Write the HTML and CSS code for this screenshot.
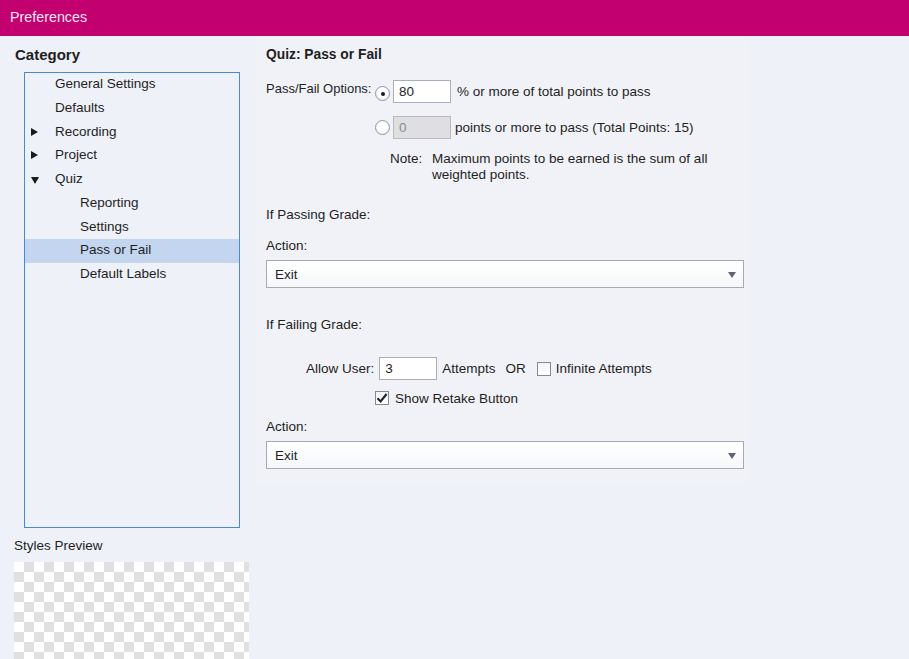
FILE: index.html
```html
<!DOCTYPE html>
<html>
<head>
  <title>Preferences</title>
  <meta charset="UTF-8">
  <link rel="stylesheet" href="styles.css">
</head>
<body>
  <div class="titlebar">Preferences</div>
  <div class="main">
    <div class="sidebar">
      <div class="heading">Category</div>
      <ul class="tree">
        <li class="node">General Settings</li>
        <li class="node">Defaults</li>
        <li class="node"><span class="twisty closed"></span>Recording</li>
        <li class="node"><span class="twisty closed"></span>Project</li>
        <li class="node"><span class="twisty open"></span>Quiz</li>
        <li class="node child">Reporting</li>
        <li class="node child">Settings</li>
        <li class="node child selected">Pass or Fail</li>
        <li class="node child">Default Labels</li>
      </ul>
      <div class="preview-label">Styles Preview</div>
      <div class="preview"></div>
    </div>

    <div class="panel">
      <div class="heading">Quiz: Pass or Fail</div>

      <div class="row opt-row">
        <span class="opt-label">Pass/Fail Options:</span>
        <span class="radio checked"></span>
        <input class="field" type="text" value="80">
        <span class="after">% or more of total points to pass</span>
      </div>
      <div class="row opt-row2">
        <span class="radio"></span>
        <input class="field" type="text" value="0" disabled>
        <span class="after tight">points or more to pass (Total Points: 15)</span>
      </div>

      <div class="note">
        <span>Note:</span>
        <span>Maximum points to be earned is the sum of all<br>weighted points.</span>
      </div>

      <div class="label pass-label">If Passing Grade:</div>
      <div class="label action-label">Action:</div>
      <div class="select"><span>Exit</span><span class="arrow"></span></div>

      <div class="label fail-label">If Failing Grade:</div>
      <div class="row allow-row">
        <span>Allow User:</span>
        <input class="field" type="text" value="3">
        <span class="attempts">Attempts</span>
        <span class="or">OR</span>
        <span class="check"></span>
        <span>Infinite Attempts</span>
      </div>
      <div class="row retake-row">
        <span class="check checked">
          <svg width="12" height="12" viewBox="0 0 12 12"><path d="M1.5 6.2 L4.6 9.4 L10.6 2" fill="none" stroke="#1c2230" stroke-width="2.1"/></svg>
        </span>
        <span>Show Retake Button</span>
      </div>

      <div class="label action-label2">Action:</div>
      <div class="select"><span>Exit</span><span class="arrow"></span></div>
    </div>
  </div>
</body>
</html>
```

FILE: styles.css
```css
body {
  margin: 0;
  width: 909px;
  height: 659px;
  overflow: hidden;
  background: #eef1f7;
  font-family: "Liberation Sans", Arial, sans-serif;
  font-size: 13.5px;
  color: #1e1e1e;
}

.titlebar {
  height: 36px;
  line-height: 34px;
  padding-left: 10px;
  background: #c2006f;
  color: #fbe6f2;
  font-size: 14.3px;
}

.main {
  display: flex;
}

.sidebar {
  width: 255px;
  flex: none;
}

.heading {
  font-weight: bold;
  font-size: 13.8px;
  line-height: 16px;
  padding-top: 11px;
}

.sidebar .heading {
  padding-left: 15px;
  font-size: 15px;
}

.tree {
  list-style: none;
  margin: 9px 0 0 24px;
  padding: 0;
  width: 214px;
  height: 454px;
  border: 1px solid #4b89cf;
}

.node {
  height: 23.75px;
  line-height: 21.5px;
  padding-left: 30px;
  position: relative;
}

.node.child {
  padding-left: 55px;
}

.node.selected {
  background: #c4d6ef;
}

.twisty {
  position: absolute;
  left: 6px;
  top: 7px;
  width: 0;
  height: 0;
}

.twisty.closed {
  border-top: 4.5px solid transparent;
  border-bottom: 4.5px solid transparent;
  border-left: 7px solid #1a1a1a;
}

.twisty.open {
  top: 9px;
  border-left: 4.5px solid transparent;
  border-right: 4.5px solid transparent;
  border-top: 7px solid #1a1a1a;
}

.preview-label {
  padding-left: 14px;
  margin-top: 10px;
  line-height: 16px;
}

.preview {
  margin: 8px 0 0 14px;
  width: 235px;
  height: 100px;
  background-color: #ffffff;
  background-image:
    linear-gradient(45deg, #e0e0e0 25%, transparent 25%, transparent 75%, #e0e0e0 75%),
    linear-gradient(45deg, #e0e0e0 25%, transparent 25%, transparent 75%, #e0e0e0 75%);
  background-size: 20px 20px;
  background-position: 0 0, 10px 10px;
}

.panel {
  width: 482px;
  height: 449px;
  padding-left: 11px;
  background: #f1f2f7;
}

.label {
  line-height: 16px;
}

.row {
  display: flex;
  align-items: center;
}

.field {
  width: 58px;
  height: 23px;
  box-sizing: border-box;
  border: 1px solid #a9adb8;
  background: #ffffff;
  font-family: inherit;
  font-size: 13.5px;
  color: #1e1e1e;
  padding: 0 0 0 5px;
  margin: 0;
}

.field:disabled {
  background: #dfdfe1;
  color: #8a8a8a;
  border-color: #b9bbc2;
}

.radio {
  width: 15px;
  height: 15px;
  box-sizing: border-box;
  border-radius: 50%;
  border: 1px solid #8e98a6;
  background: radial-gradient(circle at 50% 40%, #ffffff 40%, #e4e7ec 100%);
  margin-right: 3px;
  position: relative;
  flex: none;
}

.radio.checked::after {
  content: "";
  position: absolute;
  left: 4.5px;
  top: 4.5px;
  width: 4px;
  height: 4px;
  border-radius: 50%;
  background: #1a1a1a;
}

.opt-row {
  margin-top: 17px;
  height: 23px;
}

.opt-label {
  width: 109px;
  align-self: flex-start;
  margin-top: 1px;
  white-space: nowrap;
  font-size: 13px;
}

.opt-row .radio {
  margin-top: 4px;
}

.after {
  margin-left: 6px;
}

.after.tight {
  margin-left: 4px;
}

.opt-row2 {
  margin-top: 13px;
  height: 23px;
  padding-left: 109px;
}

.note {
  display: grid;
  grid-template-columns: 42px auto;
  margin-top: 12px;
  padding-left: 124px;
  line-height: 16px;
}

.pass-label {
  margin-top: 24px;
}

.action-label {
  margin-top: 15px;
}

.select {
  margin-top: 6px;
  width: 478px;
  height: 28px;
  box-sizing: border-box;
  border: 1px solid #a6a9b6;
  background: linear-gradient(#ffffff, #f6f7f9);
  display: flex;
  align-items: center;
  justify-content: space-between;
  padding: 0 7px 0 8px;
}

.arrow {
  width: 0;
  height: 0;
  border-left: 4.5px solid transparent;
  border-right: 4.5px solid transparent;
  border-top: 6px solid #5e6474;
  margin-top: 2px;
}

.fail-label {
  margin-top: 29px;
}

.allow-row {
  margin-top: 24px;
  height: 23px;
  padding-left: 40px;
}

.allow-row .field {
  margin-left: 5px;
}

.attempts {
  margin-left: 5px;
}

.or {
  margin-left: 10px;
  margin-right: 11px;
}

.check {
  width: 14px;
  height: 14px;
  box-sizing: border-box;
  border: 1px solid #7f8999;
  background: linear-gradient(#f3f4f6, #ffffff);
  margin-right: 5px;
  display: flex;
  align-items: center;
  justify-content: center;
  flex: none;
}

.retake-row {
  margin-top: 10px;
  height: 16px;
  padding-left: 109px;
}

.retake-row .check {
  margin-right: 6px;
}

.action-label2 {
  margin-top: 13px;
}
```
